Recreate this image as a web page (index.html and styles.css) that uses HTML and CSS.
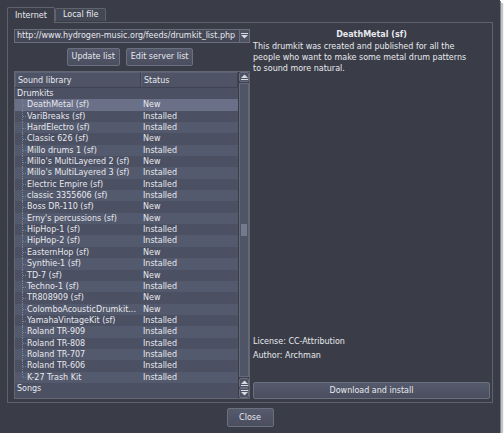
FILE: index.html
```html
<!DOCTYPE html>
<html>
<head>
<meta charset="utf-8">
<link rel="stylesheet" href="styles.css">
</head>
<body>
<div class="window">
  <div class="tabs">
    <div class="tabbar">
      <div class="tab active">Internet</div>
      <div class="tab">Local file</div>
    </div>
    <div class="pane">
      <div class="leftcol">
        <div class="combo">
          <span class="combo-text">http://www.hydrogen-music.org/feeds/drumkit_list.php</span>
          <span class="combo-arrow"><svg width="7" height="6" viewBox="0 0 7 6"><rect x="0" y="0" width="7" height="1" fill="#d8dae0"/><path d="M0 2 H7 L3.5 5.5 Z" fill="#d8dae0"/></svg></span>
        </div>
        <div class="btnrow">
          <div class="btn">Update list</div>
          <div class="btn">Edit server list</div>
        </div>
        <div class="tree">
          <div class="list">
            <div class="header">
              <div class="hcell c1">Sound library</div>
              <div class="hcell c2">Status</div>
            </div>
            <div class="rows">
              <div class="row top"><span class="c1">Drumkits</span><span class="c2"></span></div>
              <div class="row alt sel child"><span class="c1">DeathMetal (sf)</span><span class="c2">New</span></div>
              <div class="row child"><span class="c1">VariBreaks (sf)</span><span class="c2">Installed</span></div>
              <div class="row alt child"><span class="c1">HardElectro (sf)</span><span class="c2">Installed</span></div>
              <div class="row child"><span class="c1">Classic 626 (sf)</span><span class="c2">New</span></div>
              <div class="row alt child"><span class="c1">Millo drums 1 (sf)</span><span class="c2">Installed</span></div>
              <div class="row child"><span class="c1">Millo's MultiLayered 2 (sf)</span><span class="c2">New</span></div>
              <div class="row alt child"><span class="c1">Millo's MultiLayered 3 (sf)</span><span class="c2">Installed</span></div>
              <div class="row child"><span class="c1">Electric Empire (sf)</span><span class="c2">Installed</span></div>
              <div class="row alt child"><span class="c1">classic 3355606 (sf)</span><span class="c2">Installed</span></div>
              <div class="row child"><span class="c1">Boss DR-110 (sf)</span><span class="c2">New</span></div>
              <div class="row alt child"><span class="c1">Erny's percussions (sf)</span><span class="c2">New</span></div>
              <div class="row child"><span class="c1">HipHop-1 (sf)</span><span class="c2">Installed</span></div>
              <div class="row alt child"><span class="c1">HipHop-2 (sf)</span><span class="c2">Installed</span></div>
              <div class="row child"><span class="c1">EasternHop (sf)</span><span class="c2">New</span></div>
              <div class="row alt child"><span class="c1">Synthie-1 (sf)</span><span class="c2">Installed</span></div>
              <div class="row child"><span class="c1">TD-7 (sf)</span><span class="c2">New</span></div>
              <div class="row alt child"><span class="c1">Techno-1 (sf)</span><span class="c2">Installed</span></div>
              <div class="row child"><span class="c1">TR808909 (sf)</span><span class="c2">New</span></div>
              <div class="row alt child"><span class="c1">ColomboAcousticDrumkit...</span><span class="c2">New</span></div>
              <div class="row child"><span class="c1">YamahaVintageKit (sf)</span><span class="c2">Installed</span></div>
              <div class="row alt child"><span class="c1">Roland TR-909</span><span class="c2">Installed</span></div>
              <div class="row child"><span class="c1">Roland TR-808</span><span class="c2">Installed</span></div>
              <div class="row alt child"><span class="c1">Roland TR-707</span><span class="c2">Installed</span></div>
              <div class="row child"><span class="c1">Roland TR-606</span><span class="c2">Installed</span></div>
              <div class="row alt child last"><span class="c1">K-27 Trash Kit</span><span class="c2">Installed</span></div>
              <div class="row top"><span class="c1">Songs</span><span class="c2"></span></div>
            </div>
          </div>
          <div class="scrollbar">
            <div class="sarrow"><svg width="7" height="6" viewBox="0 0 7 6"><path d="M0 4 H7 L3.5 0.5 Z" fill="#d8dae0"/><rect x="0" y="5" width="7" height="1" fill="#d8dae0"/></svg></div>
            <div class="strack">
              <div class="handle">
                <div class="grip"></div>
              </div>
            </div>
            <div class="sarrow"><svg width="7" height="6" viewBox="0 0 7 6"><path d="M0 4 H7 L3.5 0.5 Z" fill="#d8dae0"/><rect x="0" y="5" width="7" height="1" fill="#d8dae0"/></svg></div>
            <div class="sarrow"><svg width="7" height="6" viewBox="0 0 7 6"><rect x="0" y="0" width="7" height="1" fill="#d8dae0"/><path d="M0 2 H7 L3.5 5.5 Z" fill="#d8dae0"/></svg></div>
          </div>
        </div>
      </div>
      <div class="rightcol">
        <div class="title">DeathMetal (sf)</div>
        <div class="desc">This drumkit was created and published for all the people who want to make some metal drum patterns to sound more natural.</div>
        <div class="spacer"></div>
        <div class="meta">License: CC-Attribution</div>
        <div class="meta">Author: Archman</div>
        <div class="btn wide">Download and install</div>
      </div>
    </div>
  </div>
  <div class="footer">
    <div class="btn close">Close</div>
  </div>
</div>
</body>
</html>
```

FILE: styles.css
```css
html, body {
  margin: 0;
  padding: 0;
  background: #ffffff;
}
body {
  font-family: "DejaVu Sans", "Liberation Sans", sans-serif;
  font-size: 8px;
  color: #e8e9ee;
}
.window {
  width: 500px;
  height: 433px;
  box-sizing: border-box;
  background: #3a3d47;
  padding: 7px 0 0 7px;
  box-shadow: 1px 1px 0 #7e8088, 3px 3px 1px #c4c4c6;
}
.tabs {
  width: 486px;
}
.tabbar {
  display: flex;
  align-items: flex-end;
  height: 15px;
}
.tab {
  box-sizing: border-box;
  height: 13px;
  padding: 0 7px;
  line-height: 12px;
  border: 1px solid #5f636e;
  border-bottom: none;
  border-radius: 2px 2px 0 0;
  background: #444855;
  margin-bottom: 1px;
}
.tab.active {
  height: 16px;
  line-height: 15px;
  background: #3a3d47;
  margin-bottom: -1px;
  position: relative;
  z-index: 1;
  width: 48px;
}
.pane {
  box-sizing: border-box;
  height: 381px;
  border: 1px solid #5f636e;
  padding: 6px 2px 3px 6px;
  display: flex;
  gap: 3px;
}
.leftcol {
  width: 236px;
  display: flex;
  flex-direction: column;
}
.combo {
  box-sizing: border-box;
  height: 14px;
  border: 1px solid #6a6e7a;
  background: #444856;
  display: flex;
  align-items: stretch;
}
.combo-text {
  flex: 1;
  padding-left: 2px;
  line-height: 12px;
  white-space: nowrap;
  overflow: hidden;
}
.combo-arrow {
  width: 9px;
  border-left: 1px solid #6a6e7a;
  background: #4e5262;
  display: flex;
  align-items: center;
  justify-content: center;
}
.btnrow {
  display: flex;
  justify-content: center;
  gap: 6px;
  margin-top: 5px;
  padding-right: 4px;
}
.btn {
  box-sizing: border-box;
  height: 18px;
  padding: 0 4px;
  border: 1px solid #6c707e;
  border-radius: 2px;
  background: linear-gradient(#555a6c, #4a4e5f);
  line-height: 16px;
  text-align: center;
  white-space: nowrap;
}
.tree {
  margin-top: 5px;
  height: 328px;
  box-sizing: border-box;
  border: 1px solid #636774;
  display: flex;
  background: #4b5063;
}
.list {
  width: 223px;
  display: flex;
  flex-direction: column;
}
.header {
  display: flex;
  height: 16px;
  box-sizing: border-box;
  border-bottom: 1px solid #3f4250;
  background: #4e5365;
}
.hcell {
  box-sizing: border-box;
  line-height: 15px;
  padding-left: 2px;
  border-right: 1px solid #3f4250;
  border-top: 1px solid #5c6174;
  border-left: 1px solid #5c6174;
}
.hcell.c1 { width: 126px; }
.hcell.c2 { width: 97px; }
.rows {
  display: flex;
  flex-direction: column;
}
.row {
  display: flex;
  height: 11.35px;
  line-height: 11.35px;
  background: #4b5063;
  white-space: nowrap;
}
.row.alt {
  background: #545a6d;
}
.row.sel {
  background: #6a7088;
}
.row .c1 {
  width: 126px;
  padding-left: 2px;
  box-sizing: border-box;
  position: relative;
  overflow: hidden;
}
.row .c2 {
  width: 97px;
  padding-left: 2px;
  box-sizing: border-box;
}
.row.child .c1 {
  padding-left: 12px;
}
.row.child .c1::before {
  content: "";
  position: absolute;
  left: 7px;
  top: 0;
  bottom: 0;
  border-left: 1px dotted #7d8294;
}
.row.child.last .c1::before {
  bottom: 50%;
}
.row.child .c1::after {
  content: "";
  position: absolute;
  left: 8px;
  width: 3px;
  top: 50%;
  border-top: 1px dotted #7d8294;
}
.scrollbar {
  width: 11px;
  display: flex;
  flex-direction: column;
  background: #3d404c;
  border-left: 1px solid #3a3d47;
}
.sarrow {
  height: 10px;
  box-sizing: border-box;
  border: 1px solid #6a6e7c;
  border-radius: 2px;
  background: #4d5263;
  display: flex;
  align-items: center;
  justify-content: center;
}
.strack {
  flex: 1;
  padding: 1px 0 1px 0;
  display: flex;
}
.handle {
  flex: 1;
  box-sizing: border-box;
  border: 1px solid #656a79;
  background: #4f5467;
  display: flex;
  align-items: center;
  justify-content: center;
}
.grip {
  width: 6px;
  height: 12px;
  background-image: radial-gradient(circle, #8a8fa2 0.6px, transparent 0.9px);
  background-size: 2px 2px;
}
.rightcol {
  width: 237px;
  display: flex;
  flex-direction: column;
}
.title {
  font-weight: bold;
  text-align: center;
  line-height: 12px;
  margin-top: 0;
}
.desc {
  line-height: 11px;
  margin-top: 0;
  padding-right: 22px;
}
.spacer {
  flex: 1;
}
.meta {
  line-height: 12px;
  margin-bottom: 2px;
}
.btn.wide {
  height: 17px;
  line-height: 15px;
  margin-top: 18px;
}
.footer {
  display: flex;
  justify-content: center;
  margin-top: 5px;
  padding-right: 7px;
}
.btn.close {
  width: 47px;
  height: 19px;
  line-height: 17px;
}
```
